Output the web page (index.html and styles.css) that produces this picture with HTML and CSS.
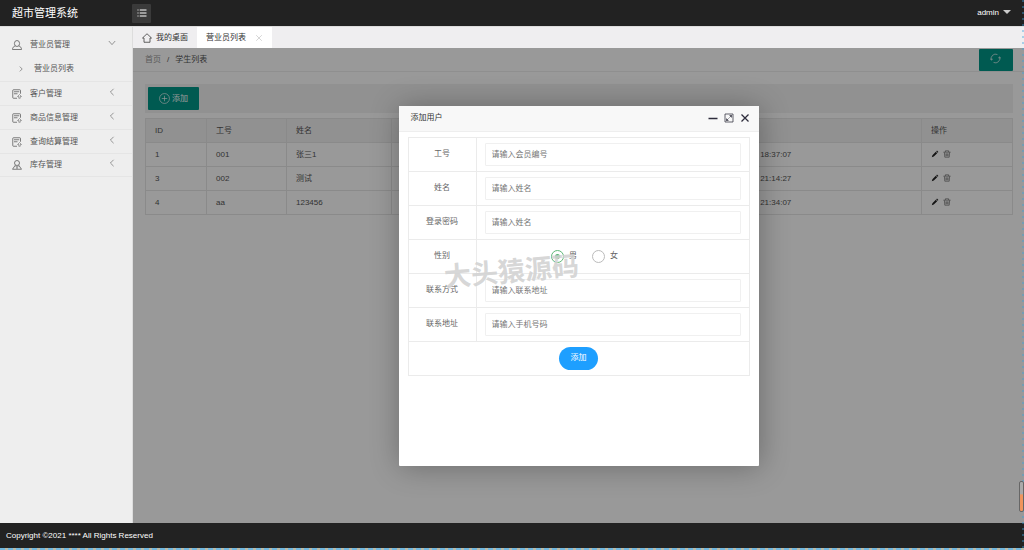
FILE: index.html
```html
<!DOCTYPE html>
<html lang="zh-CN">
<head>
<meta charset="utf-8">
<meta name="viewport" content="width=device-width, initial-scale=1">
<title>超市管理系统</title>
<link rel="stylesheet" href="styles.css">
</head>
<body>
<svg class="defs" aria-hidden="true">
  <symbol id="i-user" viewBox="0 0 20 20"><ellipse cx="10" cy="7" rx="5.200" ry="6"/><path d="M6.500 12C3 13 1 15 1 19H19C19 15 17 13 13.500 12"/></symbol>
  <symbol id="i-member" viewBox="0 0 20 20"><circle cx="10" cy="6" r="5"/><path d="M6.500 10.500 1 18.500H19L13.500 10.500M7 11.500 10 15 13 11.500M10 15V18"/></symbol>
  <symbol id="i-form" viewBox="0 0 20 20"><path d="M10 18.500H3Q1.500 18.500 1.500 17V3Q1.500 1.500 3 1.500H15.500Q17 1.500 17 3V9.500M4 5.500H14.500M4 9.500H11"/><path d="M15 11 11 15H13.500V18.500H16.500V15H19Z" stroke-width="1"/></symbol>
  <symbol id="i-down" viewBox="0 0 20 20"><path d="M2 5 10 14 18 5"/></symbol>
  <symbol id="i-left" viewBox="0 0 20 20"><path d="M14 2 6 10 14 18"/></symbol>
  <symbol id="i-right" viewBox="0 0 20 20"><path d="M6 2 14 10 6 18"/></symbol>
  <symbol id="i-pen" viewBox="0 0 20 20"><path d="M2 18 3.500 13 12 4.500 15.500 8 7 16.500ZM13 3.500 15 1.500 18.500 5 16.500 7Z" fill="currentColor" stroke="none"/></symbol>
  <symbol id="i-trash" viewBox="0 0 20 20"><path d="M1 5.500H19M6 5V2H14V5M3.500 6 4.500 18H15.500L16.500 6M7.500 8.500V15.500M10 8.500V15.500M12.500 8.500V15.500"/></symbol>
</svg>

<header class="topbar">
  <h1 class="brand">超市管理系统</h1>
  <button class="toggle" type="button" aria-label="菜单">
    <svg class="icon icon-m" viewBox="0 0 20 20"><path d="M1 4H3M1 10H3M1 16H3M5.500 4H19M5.500 10H19M5.500 16H19" stroke-width="2"/></svg>
  </button>
  <button class="account" type="button">admin <span class="caret"></span></button>
</header>

<div class="shell">
  <nav class="side">
    <a class="item" href="#"><svg class="icon icon-m"><use href="#i-user"/></svg><span class="label">营业员管理</span><svg class="icon icon-s"><use href="#i-down"/></svg></a>
    <a class="item sub" href="#"><svg class="icon icon-xs"><use href="#i-right"/></svg><span class="label">营业员列表</span></a>
    <a class="item line" href="#"><svg class="icon icon-m"><use href="#i-form"/></svg><span class="label">客户管理</span><svg class="icon icon-s"><use href="#i-left"/></svg></a>
    <a class="item line" href="#"><svg class="icon icon-m"><use href="#i-form"/></svg><span class="label">商品信息管理</span><svg class="icon icon-s"><use href="#i-left"/></svg></a>
    <a class="item line" href="#"><svg class="icon icon-m"><use href="#i-form"/></svg><span class="label">查询结算管理</span><svg class="icon icon-s"><use href="#i-left"/></svg></a>
    <a class="item line last" href="#"><svg class="icon icon-m"><use href="#i-member"/></svg><span class="label">库存管理</span><svg class="icon icon-s"><use href="#i-left"/></svg></a>
  </nav>

  <div class="work">
    <div class="tabs">
      <a class="tab" href="#"><svg class="icon icon-m" viewBox="0 0 20 20"><path d="M1 10 10 1.500 19 10H16V18.500H4V10Z"/></svg>我的桌面</a>
      <a class="tab active" href="#">营业员列表<svg class="icon icon-x" viewBox="0 0 20 20"><path d="M3 3 17 17M17 3 3 17"/></svg></a>
    </div>

    <main class="page">
      <div class="crumbs">
        <span><a class="root" href="#">首页</a><span class="sep">/</span><a href="#">学生列表</a></span>
        <button class="btn refresh" type="button" aria-label="刷新"><svg class="icon icon-l" viewBox="0 0 20 20"><path d="M2.500 12.500A8 8 0 0 1 13.500 2.800M17.500 7.500A8 8 0 0 1 6.500 17.200M.5 10 2.500 13 5 11M19.500 10 17.500 7 15 9"/></svg></button>
      </div>
      <div class="content">
        <div class="tools"><button class="btn add" type="button"><svg class="icon icon-l" viewBox="0 0 20 20"><circle cx="10" cy="10" r="9"/><path d="M10 5V15M5 10H15"/></svg>添加</button></div>
        <table class="list">
          <colgroup><col class="c-id"><col class="c-no"><col class="c-name"><col class="c-sex"><col><col class="c-time"><col class="c-act"></colgroup>
          <thead><tr><th>ID</th><th>工号</th><th>姓名</th><th>性别</th><th>联系方式</th><th>时间</th><th>操作</th></tr></thead>
          <tbody>
            <tr><td>1</td><td>001</td><td>张三1</td><td>男</td><td></td><td>2021-03-01 18:37:07</td><td><button class="act" type="button" aria-label="编辑"><svg class="icon icon-s pen"><use href="#i-pen"/></svg></button><button class="act" type="button" aria-label="删除"><svg class="icon icon-s"><use href="#i-trash"/></svg></button></td></tr>
            <tr><td>3</td><td>002</td><td>测试</td><td>男</td><td></td><td>2021-03-01 21:14:27</td><td><button class="act" type="button" aria-label="编辑"><svg class="icon icon-s pen"><use href="#i-pen"/></svg></button><button class="act" type="button" aria-label="删除"><svg class="icon icon-s"><use href="#i-trash"/></svg></button></td></tr>
            <tr><td>4</td><td>aa</td><td>123456</td><td>男</td><td></td><td>2021-03-01 21:34:07</td><td><button class="act" type="button" aria-label="编辑"><svg class="icon icon-s pen"><use href="#i-pen"/></svg></button><button class="act" type="button" aria-label="删除"><svg class="icon icon-s"><use href="#i-trash"/></svg></button></td></tr>
          </tbody>
        </table>
      </div>

      <div class="shade">
        <section class="dialog" role="dialog" aria-labelledby="dialog-title">
          <div class="dialog-head">
            <h2 class="dialog-title" id="dialog-title">添加用户</h2>
            <button class="win" type="button" aria-label="最小化"><svg class="icon icon-m" viewBox="0 0 20 20"><path d="M1 11H19" stroke-width="3"/></svg></button>
            <button class="win" type="button" aria-label="最大化"><svg class="icon icon-m" viewBox="0 0 20 20"><path d="M2 2H18V18H2ZM11 9 15 5M11 5H15V9M5 11V15H9M5 15 9 11"/></svg></button>
            <button class="win" type="button" aria-label="关闭"><svg class="icon icon-m" viewBox="0 0 20 20"><path d="M3 3 17 17M17 3 3 17" stroke-width="2.500"/></svg></button>
          </div>
          <form class="form">
            <div class="row"><label class="name" for="no">工号</label><div class="field"><input class="text" id="no" type="text" placeholder="请输入会员编号"></div></div>
            <div class="row"><label class="name" for="uname">姓名</label><div class="field"><input class="text" id="uname" type="text" placeholder="请输入姓名"></div></div>
            <div class="row"><label class="name" for="pwd">登录密码</label><div class="field"><input class="text" id="pwd" type="password" placeholder="请输入姓名"></div></div>
            <div class="row"><span class="name">性别</span><div class="field radios"><label class="choice"><input class="radio" type="radio" name="sex" checked>男</label><label class="choice"><input class="radio" type="radio" name="sex">女</label></div></div>
            <div class="row"><label class="name" for="tel">联系方式</label><div class="field"><input class="text" id="tel" type="text" placeholder="请输入联系地址"></div></div>
            <div class="row"><label class="name" for="addr">联系地址</label><div class="field"><input class="text" id="addr" type="text" placeholder="请输入手机号码"></div></div>
            <div class="row submit-row"><button class="submit" type="button">添加</button></div>
          </form>
          <div class="watermark">大头猿源码</div>
        </section>
      </div>
    </main>
  </div>
</div>

<footer class="foot">Copyright ©2021 **** All Rights Reserved</footer>
<div class="edge-bottom"></div>
<div class="edge-right"></div>
<div class="thumb"></div>
</body>
</html>
```

FILE: styles.css
```css
* { box-sizing: border-box; }
body {
  margin: 0;
  min-height: 100vh;
  display: flex;
  flex-direction: column;
  position: relative;
  overflow: hidden;
  font: 8px/12px "Liberation Sans", "Noto Sans CJK SC", sans-serif;
  color: #555;
  background: #fff;
}
a { color: inherit; text-decoration: none; }
button { font: inherit; color: inherit; border: 0; padding: 0; background: none; cursor: pointer; }
h1, h2 { margin: 0; font-weight: normal; }
.defs { display: none; }
.icon { flex: none; display: block; fill: none; stroke: currentColor; stroke-width: 1.5; }
.icon-xs { width: 6px; height: 6px; stroke-width: 2; }
.icon-s { width: 8px; height: 8px; }
.icon-m { width: 10px; height: 10px; }
.icon-l { width: 11px; height: 11px; stroke-width: 1.2; }
.icon-x { width: 8px; height: 8px; color: #bbb; }

.topbar { display: flex; align-items: center; height: 26px; background: #222; color: #fff; }
.brand { width: 132px; padding-left: 12px; font-size: 11px; line-height: 16px; }
.toggle { width: 19px; height: 19px; display: flex; align-items: center; justify-content: center; background: #3a3a3a; border-radius: 1px; }
.account { display: flex; align-items: center; gap: 4px; margin-left: auto; margin-right: 13px; }
.caret { border: 4px solid transparent; border-top-color: #ccc; border-bottom: 0; margin-bottom: 2px; }

.shell { flex: 1; display: flex; }
.side { width: 133px; padding-top: 6px; background: #eee; border-top: 1px solid #ddd; border-right: 1px solid #ddd; }
.item { display: flex; align-items: center; height: 24px; padding: 0 16px 0 12px; }
.item .label { flex: 1; margin-left: 8px; }
.item .icon-s { margin-bottom: 4px; }
.sub { padding-left: 18px; }
.sub .label { margin-left: 10px; }
.line { border-top: 1px solid #e5e5e5; }
.last { border-bottom: 1px solid #e5e5e5; }

.work { flex: 1; display: flex; flex-direction: column; min-width: 0; }
.tabs { display: flex; height: 22px; background: #efeef0; border-top: 1px solid #ddd; color: #333; }
.tab { display: flex; align-items: center; gap: 4px; padding: 0 9px; }
.active { gap: 9px; background: #fff; }

.page { flex: 1; position: relative; background: #fff; }
.crumbs { display: flex; align-items: center; justify-content: space-between; height: 24px; padding: 0 11px 0 12px; border-bottom: 1px solid #eee; }
.root { color: #999; }
.sep { margin: 0 6px; }
.btn { background: #009688; color: #fff; border-radius: 1px; display: flex; align-items: center; justify-content: center; }
.refresh { width: 34px; height: 22px; padding: 0 2px 4px 0; align-self: flex-end; }
.content { padding: 12px 11px 12px 12px; }
.tools { padding: 3px; height: 29px; background: #f2f2f2; }
.add { height: 23px; width: 51px; gap: 2px; }
.list { width: 100%; margin-top: 5px; border-collapse: collapse; table-layout: fixed; }
.list th, .list td { height: 24px; padding: 0 9px; border: 1px solid #e6e6e6; text-align: left; font-weight: normal; white-space: nowrap; }
.list th { background: #f2f2f2; }
.c-id { width: 61px; }
.c-no { width: 80px; }
.c-name { width: 105px; }
.c-sex { width: 120px; }
.c-time { width: 214px; }
.c-act { width: 91px; }
.act { display: inline-block; vertical-align: middle; margin-right: 4px; }
.pen { color: #222; }

.shade { position: absolute; inset: 0; display: flex; align-items: center; justify-content: center; background: rgba(0, 0, 0, .4); overflow: hidden; }
.dialog { position: relative; width: 360px; min-height: 360px; background: #fff; border-radius: 1px; box-shadow: 1px 1px 30px rgba(0, 0, 0, .3); color: #666; }
.dialog-head { display: flex; align-items: center; gap: 6px; height: 26px; padding: 0 9px 0 12px; background: #f8f8f8; border-bottom: 1px solid #eee; color: #333; }
.dialog-title { flex: 1; font-size: 8px; }
.win { color: #2e2d3c; }
.form { margin: 5px 9px; border: 1px solid #ebebeb; border-bottom: 0; }
.row { display: flex; height: 34px; border-bottom: 1px solid #ebebeb; }
.name { flex: none; width: 68px; display: flex; align-items: center; justify-content: center; border-right: 1px solid #ebebeb; }
.field { flex: 1; display: flex; align-items: center; padding: 0 8px; }
.text { width: 100%; height: 23px; padding: 0 6px; border: 1px solid #f0f0f0; border-radius: 1px; font: inherit; outline: 0; }
.text::placeholder { color: #757575; }
.radios { justify-content: center; gap: 15px; padding-right: 64px; padding-left: 8px; }
.choice { display: flex; align-items: center; gap: 5px; }
.radio { appearance: none; width: 13px; height: 13px; margin: 0; border: 1px solid #bbb; border-radius: 50%; }
.radio:checked { border-color: #5fb878; background: radial-gradient(circle, #5fb878 2px, #fff 3px); }
.submit-row { align-items: center; justify-content: center; }
.submit { width: 39px; height: 23px; border-radius: 12px; background: #1e9fff; color: #fff; }
.watermark { position: absolute; left: 45px; top: 148px; font-size: 27px; line-height: 36px; font-weight: bold; color: rgba(210, 210, 210, .9); transform: rotate(-5deg); pointer-events: none; white-space: nowrap; }

.foot { height: 25px; padding: 0 6px; background: #222; color: #fff; line-height: 26px; }
.edge-bottom { height: 2px; background: repeating-linear-gradient(90deg, #72b7de 0 5px, #b9bba8 5px 8px); }
.edge-right { position: absolute; right: 0; top: 0; bottom: 0; width: 2px; background: repeating-linear-gradient(rgba(60, 160, 220, .4) 0 2px, transparent 2px 6px); }
.thumb { position: absolute; right: 0; bottom: 38px; width: 5px; height: 31px; border: 1px solid #666; border-radius: 2px; background: linear-gradient(#aaa 40%, #f0955d 45%); }
```
